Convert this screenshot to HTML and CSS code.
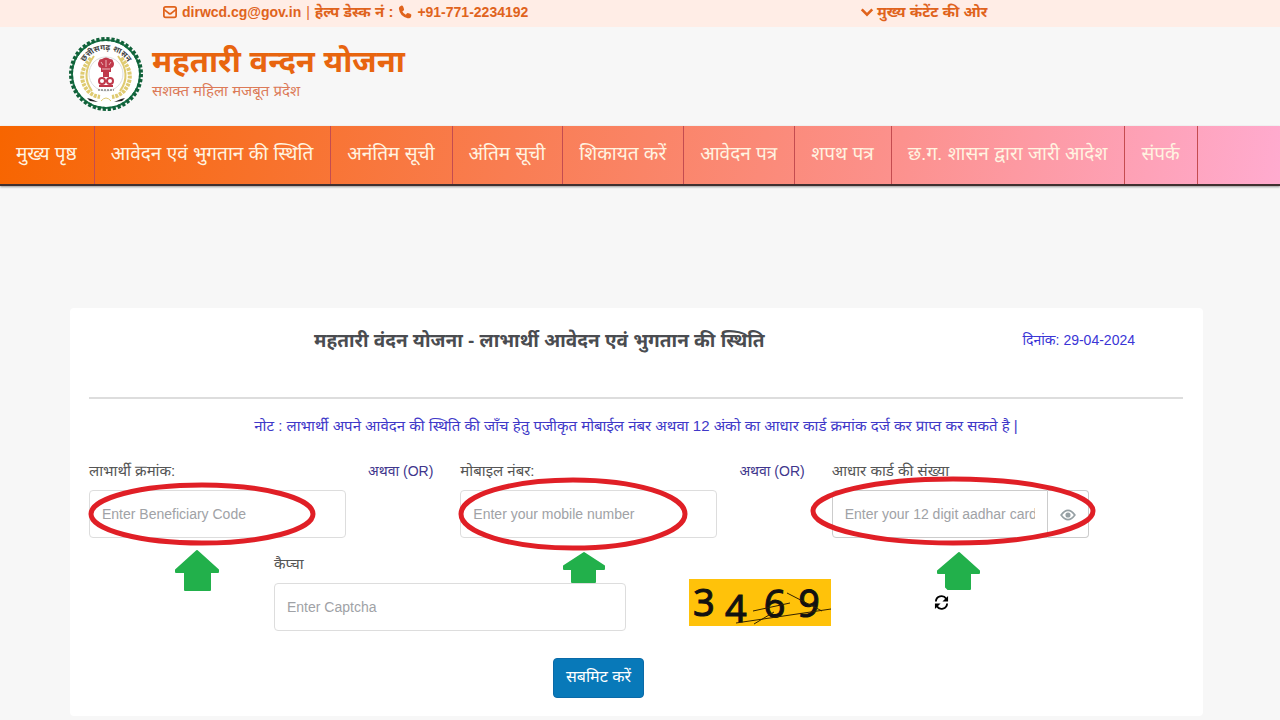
FILE: index.html
```
<!DOCTYPE html>
<html lang="hi">
<head>
	<meta charset="utf-8">
	<title>महतारी वन्दन योजना</title>
	<link rel="stylesheet" href="styles.css">
</head>
<body>
<div class="topBar">
	<div class="contact">
		<svg class="icon" viewBox="0 0 16 16" fill="none" stroke="currentColor" stroke-width="2"><rect x="1" y="2" width="14" height="12" rx="2"/><path d="M1 5l5 4q2 2 4 0l5-4"/></svg>
		<a href="mailto:dirwcd.cg@gov.in">dirwcd.cg@gov.in</a>
		<span class="divider">|</span>
		<span class="hindi">हेल्प डेस्क नं :</span>
		<svg class="icon" viewBox="0 0 16 16" fill="currentColor"><path d="M3 1q2-1 3 1l1 3q0 1-2 2 1 3 4 4 1-2 2-2l3 1q2 1 1 3-1 3-4 2Q2 13 1 4q0-2 2-3z"/></svg>
		<a href="tel:+917712234192">+91-771-2234192</a>
	</div>
	<a class="skipLink hindi" href="#content"><svg class="icon" viewBox="0 0 16 16" fill="none" stroke="currentColor" stroke-width="3"><path d="M2 5l6 6 6-6"/></svg>मुख्य कंटेंट की ओर</a>
</div>

<header class="header">
	<svg class="logo" viewBox="0 0 74 74">
		<circle cx="37" cy="37" r="34" fill="#fff" stroke="#1c7a4b" stroke-width="2"/>
		<circle cx="37" cy="37" r="35" fill="none" stroke="#11613a" stroke-width="4" stroke-dasharray="3.200 1.800"/>
		<path id="ring" d="M13 31A25 25 0 0 1 61 31" fill="none"/>
		<text font-size="8" fill="#444" font-weight="bold" text-anchor="middle"><textPath href="#ring" startOffset="50%">छत्तीसगढ़ शासन</textPath></text>
		<g fill="none" stroke="#dfcb72">
			<path d="M22 21Q6 38 19 54q5 5 12 6M52 21q16 17 3 33-5 5-12 6" stroke-width="4" stroke-dasharray="3 1"/>
			<path d="M25 19Q11 38 23 54M49 19q14 19 2 35" stroke-width="2"/>
			<path d="M32 64q5-6 10 0"/>
		</g>
		<circle cx="37" cy="37" r="17" fill="#fff" stroke="#ddd"/>
		<g fill="#c0394b">
			<path d="M30 24q0-2 3-2 4-3 8 0 3 0 3 2 2 3 0 6l-2 1v4H32v-4l-2-1q-2-3 0-6z"/>
			<path d="M34 35h6v5h-6zM30 48h14v2H30z"/>
		</g>
		<path d="M32 25l2 3M37 23v7M42 25l-2 3M33 32h8" stroke="#ecb4b8" fill="none"/>
		<g fill="none" stroke="#c0394b" stroke-width="2"><circle cx="33" cy="44" r="3"/><circle cx="41" cy="44" r="3"/><path d="M35 44h4"/></g>
		<path d="M29 53h16" stroke="#555" stroke-dasharray="2 1"/>
		<path d="M18 61l4 1 7 3-8-1zM56 61l-4 1-7 3 8-1z" fill="#222"/>
	</svg>
	<div>
		<h1 class="siteName">महतारी वन्दन योजना</h1>
		<p class="tagline">सशक्त महिला मजबूत प्रदेश</p>
	</div>
</header>

<nav class="navBar">
	<a href="#">मुख्य पृष्ठ</a>
	<a href="#">आवेदन एवं भुगतान की स्थिति</a>
	<a href="#">अनंतिम सूची</a>
	<a href="#">अंतिम सूची</a>
	<a href="#">शिकायत करें</a>
	<a href="#">आवेदन पत्र</a>
	<a href="#">शपथ पत्र</a>
	<a href="#">छ.ग. शासन द्वारा जारी आदेश</a>
	<a href="#">संपर्क</a>
</nav>

<main class="card" id="content">
	<div class="cardHead">
		<h2>महतारी वंदन योजना - लाभार्थी आवेदन एवं भुगतान की स्थिति</h2>
		<span class="date">दिनांक: 29-04-2024</span>
	</div>
	<p class="note">नोट : लाभार्थी अपने आवेदन की स्थिति की जाँच हेतु पजीकृत मोबाईल नंबर अथवा 12 अंको का आधार कार्ड क्रमांक दर्ज कर प्राप्त कर सकते है |</p>

	<form>
		<div class="searchRow">
			<div class="field">
				<label for="beneficiary">लाभार्थी क्रमांक:</label>
				<div class="inputWrap">
					<input id="beneficiary" type="text" placeholder="Enter Beneficiary Code">
					<svg class="mark" viewBox="0 0 259 48">
						<ellipse cx="113" cy="24" rx="111" ry="29"/>
						<path d="M108 61l21 19v2h-8v18H96V82h-9v-2z"/>
					</svg>
				</div>
			</div>
			<span class="or">अथवा (OR)</span>
			<div class="field">
				<label for="mobile">मोबाइल नंबर:</label>
				<div class="inputWrap">
					<input id="mobile" type="text" placeholder="Enter your mobile number">
					<svg class="mark" viewBox="0 0 259 48">
						<ellipse cx="113" cy="24" rx="112" ry="34"/>
						<path d="M124 63l20 13v3h-9v13h-23V79h-8v-3z"/>
					</svg>
				</div>
			</div>
			<span class="or">अथवा (OR)</span>
			<div class="field">
				<label for="aadhar">आधार कार्ड की संख्या</label>
				<div class="inputWrap aadhar">
					<input id="aadhar" type="text" placeholder="Enter your 12 digit aadhar card number">
					<button type="button" class="eye" aria-label="Show number">
						<svg viewBox="0 0 18 14"><path d="M1 7q8-11 16 0-8 11-16 0z" fill="none" stroke="currentColor" stroke-width="2"/><circle cx="9" cy="7" r="3" fill="currentColor"/></svg>
					</button>
					<svg class="mark" viewBox="0 0 259 48">
						<ellipse cx="121" cy="21" rx="140" ry="32"/>
						<path d="M127 63l20 18v2h-9v16h-22l-2-2V83h-8v-2z"/>
					</svg>
				</div>
			</div>
		</div>

		<div class="captchaRow">
			<div class="field">
				<label for="captcha">कैप्चा</label>
				<div class="inputWrap"><input id="captcha" type="text" placeholder="Enter Captcha"></div>
			</div>
			<svg class="captcha" viewBox="0 0 142 47">
				<g class="digits">
					<text x="4" y="37">3</text>
					<text x="36" y="43">4</text>
					<text x="75" y="38" transform="rotate(4 85 24)">6</text>
					<text x="109" y="38" transform="rotate(5 119 24)">9</text>
				</g>
				<path d="M47 44l95-14M64 32l37-8M98 14l35 18M65 45l20-12" fill="none" stroke="#332200"/>
			</svg>
			<button type="button" class="refresh" aria-label="Refresh captcha">
				<svg viewBox="0 0 16 16"><path d="M2 7a6 6 0 0 1 11-3M14 9a6 6 0 0 1-11 3" fill="none" stroke="currentColor" stroke-width="2"/><path d="M15 1v6H9zM1 15V9h6z"/></svg>
			</button>
		</div>
		<div class="actions"><button class="submit">सबमिट करें</button></div>
	</form>
</main>
</body>
</html>
```

FILE: styles.css
```
* {
	box-sizing: border-box;
}

body {
	margin: 0;
	background: #f7f7f7;
	color: #555;
	font: 14px/20px "Liberation Sans", "Noto Sans Devanagari", sans-serif;
}

h1, h2, p {
	margin: 0;
}

a {
	color: inherit;
	text-decoration: none;
}

.topBar {
	display: flex;
	height: 27px;
	padding: 0 0 4px 163px;
	background: #ffede6;
	color: #e0631c;
	font-weight: bold;
}

.topBar .hindi {
	font-size: 15px;
}

.contact {
	display: flex;
	align-items: center;
	gap: 5px;
	width: 697px;
}

.divider {
	font-weight: normal;
}

.icon {
	width: 14px;
	height: 14px;
}

.skipLink {
	display: flex;
	align-items: center;
	gap: 3px;
}

.header {
	display: flex;
	gap: 9px;
	height: 99px;
	padding: 10px 69px;
}

.logo {
	width: 74px;
	height: 74px;
}

.siteName {
	padding-top: 6px;
	color: #e8650f;
	font-size: 31px;
	line-height: 38px;
}

.tagline {
	color: #dc7a58;
	font-size: 15px;
	line-height: 20px;
}

.navBar {
	display: flex;
	height: 60px;
	border-bottom: 2px solid #403030;
	box-shadow: 0 1px 2px #999;
	background: linear-gradient(100deg, #f76500, #f97d52 40%, #fc918d 70%, #ffabcf);
	color: #fff3e0;
	font-size: 19px;
	line-height: 56px;
	white-space: nowrap;
}

.navBar a {
	padding: 0 17px 0 16px;
	border-right: 1px solid #c44c50;
}

.card {
	margin: 122px 77px 4px 70px;
	padding: 0 0 18px 19px;
	background: #fff;
	border-radius: 4px;
}

.cardHead {
	display: flex;
	height: 91px;
	margin-right: 20px;
	padding: 20px 48px 0 225px;
	justify-content: space-between;
	border-bottom: 2px solid #ddd;
}

.cardHead h2 {
	color: #4a4c50;
	font-size: 19px;
	line-height: 26px;
}

.date {
	line-height: 24px;
	color: #3a35d6;
}

.note {
	margin: 17px 20px 0 0;
	color: #4038c8;
	font-size: 15px;
	text-align: center;
}

.searchRow {
	display: grid;
	grid-template-columns: 9fr 4fr 9fr 4fr 9fr 4fr;
	margin-top: 25px;
}

.field label {
	display: block;
	height: 29px;
	font-size: 15px;
}

.or {
	padding-left: 22px;
	color: #40368c;
}

.inputWrap {
	position: relative;
	display: flex;
	height: 48px;
}

input {
	width: 100%;
	min-width: 0;
	padding: 0 12px;
	border: 1px solid #ddd;
	border-radius: 4px;
	background: #fff;
	font: 14px "Liberation Sans", sans-serif;
}

input::placeholder {
	color: #a0a2a6;
}

.aadhar input {
	border-color: #ccc;
	border-radius: 4px 0 0 4px;
}

.eye {
	flex: 0 0 41px;
	padding: 4px 0 0;
	border: 1px solid #ccc;
	border-left: 0;
	border-radius: 0 4px 4px 0;
	background: #fff;
	color: #96a0a4;
}

.eye svg {
	width: 16px;
	height: 12px;
}

/* red ring and green arrow pointing at the field */
.mark {
	position: absolute;
	top: 0;
	left: 0;
	width: 259px;
	height: 48px;
	overflow: visible;
	pointer-events: none;
}

.mark ellipse {
	fill: none;
	stroke: #e01f26;
	stroke-width: 5;
}

.mark path {
	fill: #22b04b;
	stroke: #22b04b;
	stroke-width: 2;
	stroke-linejoin: round;
}

.captchaRow {
	display: flex;
	align-items: flex-end;
	margin: 16px 0 0 185px;
}

.captchaRow .field {
	flex: 0 1 352px;
}

.captcha {
	width: 142px;
	height: 47px;
	margin: 0 103px 5px 63px;
	overflow: visible;
	background: #ffc20a;
}

.digits {
	font: 38px "Noto Sans", sans-serif;
	fill: #111;
	stroke: #111;
}

.refresh {
	margin-bottom: 21px;
	padding: 0;
	border: 0;
	background: none;
	line-height: 0;
}

.refresh svg {
	width: 15px;
	height: 15px;
}

.actions {
	margin: 27px 0 0 464px;
}

.submit {
	display: block;
	height: 40px;
	padding: 0 12px;
	border: 1px solid #0a6aa8;
	border-radius: 4px;
	background: #0879b9;
	color: #fff;
	font: 16px "Liberation Sans", "Noto Sans Devanagari", sans-serif;
}
```
